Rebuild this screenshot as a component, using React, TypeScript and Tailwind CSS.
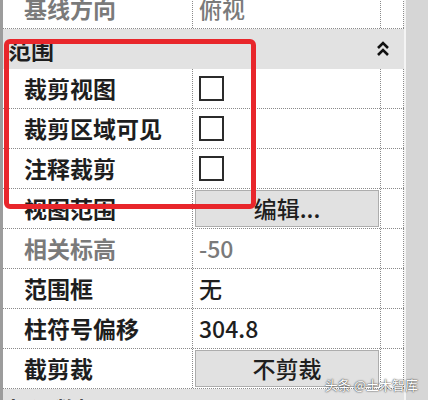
import React from 'react';

const font = { fontFamily: '"Noto Sans CJK SC", "Noto Sans", sans-serif' };

function Checkbox() {
  return <div className="w-[25px] h-[25px] border-2 border-[#2b2b2b] bg-white" />;
}

function Row({
  label,
  value,
  grey,
  button,
  check,
}: {
  label: string;
  value?: string;
  grey?: boolean;
  button?: string;
  check?: boolean;
}) {
  const tone = grey ? 'text-[#7a7a7a]' : 'text-[#1e1e1e]';
  return (
    <div className="grid grid-cols-[189px_188px_24px] h-[40px] shrink-0 border-b border-dotted border-[#8a8a8a]">
      <div className={`flex items-center pl-[21px] text-[23px] font-semibold ${tone}`}>{label}</div>
      <div className="flex items-center border-l border-dotted border-[#8a8a8a]">
        {check && (
          <div className="pl-[6px]">
            <Checkbox />
          </div>
        )}
        {button && (
          <div className="ml-[2px] h-[37px] w-[184px] flex items-center justify-center bg-[#e1e1e1] border border-[#adadad] text-[23px] font-medium text-[#1e1e1e]">
            {button}
          </div>
        )}
        {value && <span className={`pl-[6px] text-[23px] font-medium ${tone}`}>{value}</span>}
      </div>
      <div className="border-l border-r border-dotted border-[#8a8a8a]" />
    </div>
  );
}

function Header({ label, chevron }: { label: string; chevron?: boolean }) {
  return (
    <div className="flex items-center justify-between h-[40px] shrink-0 bg-[#e2e2e2] pl-[5px] pr-[14px]">
      <span className="text-[23px] font-semibold text-[#1e1e1e]">{label}</span>
      {chevron && (
        <svg width="14" height="18" viewBox="0 0 14 18" className="text-[#111]">
          <path d="M2 8 L7 3 L12 8" fill="none" stroke="currentColor" strokeWidth="2.6" />
          <path d="M2 15 L7 10 L12 15" fill="none" stroke="currentColor" strokeWidth="2.6" />
        </svg>
      )}
    </div>
  );
}

export default function App() {
  return (
    <div className="relative w-[428px] h-[400px] overflow-hidden bg-white" style={font}>
      <div className="flex h-full">
        <div className="w-[404px] border-l-[3px] border-[#9c9c9c] flex flex-col -mt-[11px]">
          <Row label="基线方向" value="俯视" grey />
          <Header label="范围" chevron />
          <Row label="裁剪视图" check />
          <Row label="裁剪区域可见" check />
          <Row label="注释裁剪" check />
          <Row label="视图范围" button="编辑..." />
          <Row label="相关标高" value="-50" grey />
          <Row label="范围框" value="无" />
          <Row label="柱符号偏移" value="304.8" />
          <Row label="截剪裁" button="不剪裁" />
          <Header label="标识数据" />
        </div>
        <div className="flex-1 bg-[#d6d6d6] border-l-[2px] border-[#f4f4f4]" />
      </div>

      <div className="absolute left-[4px] top-[39px] w-[252px] h-[170px] border-[5px] border-[#e8262b] rounded-[6px]" />

      <div className="absolute right-[10px] top-[375px] text-[13px] text-white [text-shadow:0_0_2px_#444,0_0_1px_#444]">
        头条 @土木智库
      </div>
    </div>
  );
}
